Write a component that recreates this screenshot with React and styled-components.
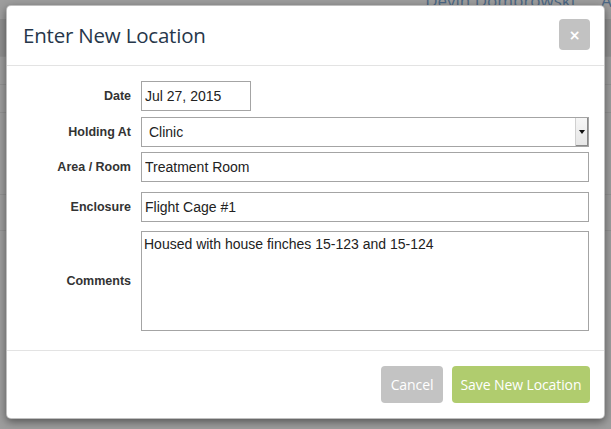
import React from "react";
import styled, { createGlobalStyle } from "styled-components";

const GlobalStyle = createGlobalStyle`
  html, body {
    margin: 0;
    padding: 0;
    overflow: hidden;
  }
  * {
    box-sizing: border-box;
  }
`;

const Screen = styled.div`
  position: relative;
  width: 611px;
  height: 429px;
  overflow: hidden;
  background: #9d9d9d;
`;

const PageNav = styled.div`
  display: flex;
  justify-content: flex-end;
  column-gap: 26px;
  height: 30px;
  margin-top: -11px;
  font-family: "Open Sans", "Liberation Sans", sans-serif;
  font-size: 17px;
  color: #4b6784;
  white-space: nowrap;
  .nav-more {
    margin-right: -9px;
  }
`;

const PageBand = styled.div`
  height: 38px;
  background: #8f8f8f;
  border-bottom: 1px solid #939393;
`;

const PageRow = styled.div`
  height: ${(props) => props.$h}px;
  border-bottom: 1px solid #929292;
`;

const Modal = styled.div`
  position: absolute;
  left: 6px;
  top: 5px;
  width: 599px;
  height: 414px;
  display: flex;
  flex-direction: column;
  background: #fff;
  border-radius: 5px;
  border: 1px solid rgba(0, 0, 0, 0.25);
  box-shadow: 0 3px 9px rgba(0, 0, 0, 0.45);
  overflow: hidden;
`;

const Header = styled.div`
  display: flex;
  align-items: center;
  justify-content: space-between;
  height: 60px;
  padding: 0 14px 2px 16px;
  border-bottom: 1px solid #e3e3e3;
  h4 {
    margin: 0;
    font-family: "Open Sans", "Liberation Sans", sans-serif;
    font-weight: 400;
    font-size: 20.5px;
    letter-spacing: -0.2px;
    color: #27374a;
  }
`;

const CloseButton = styled.button`
  display: flex;
  align-items: center;
  justify-content: center;
  width: 31px;
  height: 31px;
  padding: 0;
  border: none;
  border-radius: 4px;
  background: #c2c2c2;
  color: #fff;
  font-family: "DejaVu Sans", sans-serif;
  font-weight: 700;
  font-size: 14px;
  line-height: 1;
`;

const Body = styled.div`
  flex: 1;
  padding: 15px 15px 0 15px;
`;

const Row = styled.div`
  display: grid;
  grid-template-columns: 109px 1fr;
  column-gap: 10px;
  align-items: center;
  margin-bottom: ${(props) => props.$gap}px;
`;

const Label = styled.label`
  text-align: right;
  font-family: "Liberation Sans", Arial, sans-serif;
  font-weight: 700;
  font-size: 12.5px;
  color: #333;
`;

const Field = styled.input`
  width: ${(props) => (props.$w ? `${props.$w}px` : "100%")};
  height: 30px;
  padding: 0 3px;
  border: 1px solid #a4a4a4;
  border-radius: 0;
  background: #fff;
  font-family: "Liberation Sans", Arial, sans-serif;
  font-size: 14px;
  color: #222;
  outline: none;
`;

const Comments = styled.textarea`
  width: 100%;
  height: 100px;
  padding: 4px 2px;
  border: 1px solid #a4a4a4;
  border-radius: 0;
  resize: none;
  font-family: "Liberation Sans", Arial, sans-serif;
  font-size: 14px;
  line-height: 17px;
  color: #222;
  outline: none;
`;

const SelectWrap = styled.div`
  position: relative;
  height: 30px;
`;

const Select = styled.select`
  appearance: none;
  width: 100%;
  height: 30px;
  padding: 0 7px;
  border: 1px solid #a4a4a4;
  border-radius: 0;
  background: #fff;
  font-family: "Liberation Sans", Arial, sans-serif;
  font-size: 14px;
  color: #222;
  outline: none;
`;

const SelectArrow = styled.span`
  position: absolute;
  top: 1px;
  right: 1px;
  bottom: 1px;
  width: 13px;
  display: flex;
  align-items: center;
  justify-content: center;
  background: linear-gradient(#f6f6f6, #e6e6e6);
  border-left: 1px solid #d0d0d0;
  box-shadow: inset -1px -1px 0 #8a8a8a;
  pointer-events: none;
  &::after {
    content: "";
    border-left: 3px solid transparent;
    border-right: 3px solid transparent;
    border-top: 4px solid #111;
  }
`;

const Footer = styled.div`
  display: flex;
  justify-content: flex-end;
  column-gap: 9px;
  padding: 15px 14px 15px 15px;
  border-top: 1px solid #e3e3e3;
`;

const Button = styled.button`
  width: ${(props) => props.$w}px;
  height: 37px;
  padding: 0;
  border: none;
  border-radius: 4px;
  background: ${(props) => props.$bg};
  color: #fff;
  font-family: "Open Sans", "Liberation Sans", sans-serif;
  font-size: 14px;
  letter-spacing: -0.1px;
`;

export default function App() {
  return (
    <>
      <GlobalStyle />
      <Screen>
        <PageNav>
          <span>Devin Dombrowski</span>
          <span className="nav-more">Ac</span>
        </PageNav>
        <PageBand />
        <PageRow $h={28} />
        <PageRow $h={28} />
        <PageRow $h={82} />
        <PageRow $h={36} />

        <Modal>
          <Header>
            <h4>Enter New Location</h4>
            <CloseButton aria-label="Close">×</CloseButton>
          </Header>

          <Body>
            <Row $gap={6}>
              <Label>Date</Label>
              <Field $w={110} defaultValue="Jul 27, 2015" />
            </Row>
            <Row $gap={5}>
              <Label>Holding At</Label>
              <SelectWrap>
                <Select defaultValue="Clinic">
                  <option>Clinic</option>
                  <option>Foster</option>
                  <option>Released</option>
                </Select>
                <SelectArrow />
              </SelectWrap>
            </Row>
            <Row $gap={10}>
              <Label>Area / Room</Label>
              <Field defaultValue="Treatment Room" />
            </Row>
            <Row $gap={9}>
              <Label>Enclosure</Label>
              <Field defaultValue="Flight Cage #1" />
            </Row>
            <Row $gap={0}>
              <Label>Comments</Label>
              <Comments defaultValue="Housed with house finches 15-123 and 15-124" />
            </Row>
          </Body>

          <Footer>
            <Button $bg="#c3c3c3" $w={62}>
              Cancel
            </Button>
            <Button $bg="#b0cc6e" $w={138}>
              Save New Location
            </Button>
          </Footer>
        </Modal>
      </Screen>
    </>
  );
}
